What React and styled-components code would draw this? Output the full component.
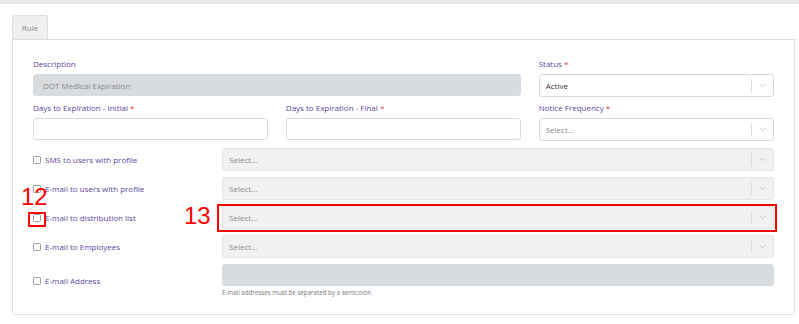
import React from 'react';
import styled, { createGlobalStyle } from 'styled-components';

const GlobalStyle = createGlobalStyle`
    body {
        margin: 0;
        background: #fff;
        font-family: "Open Sans", "Liberation Sans", sans-serif;
    }
`;

const Page = styled.div`
    position: relative;
    width: 799px;
    height: 324px;
    border-top: 4px solid #e9e9ea;
    box-sizing: border-box;
    padding: 11px 4px 0 12px;
`;

const TabBar = styled.div`
    display: flex;
    height: 24px;
`;

const Tab = styled.div`
    width: 36px;
    height: 24px;
    box-sizing: border-box;
    border: 1px solid #dedede;
    border-bottom: none;
    border-radius: 3px 3px 0 0;
    background: #efefef;
    color: #8a8a8a;
    font-size: 8px;
    display: flex;
    align-items: center;
    justify-content: center;
`;

const Panel = styled.div`
    border: 1px solid #e2e2e2;
    border-top-color: #dcdcdc;
    border-radius: 0 0 3px 3px;
    padding: 19px 20px 15px 20px;
    box-sizing: border-box;
    height: 276px;
`;

const TopGrid = styled.div`
    display: grid;
    grid-template-columns: repeat(3, 1fr);
    column-gap: 17.5px;
    row-gap: 6px;
`;

const Field = styled.div`
    grid-column: ${p => p.$span ? `span ${p.$span}` : 'auto'};
    display: flex;
    flex-direction: column;
`;

const Label = styled.label`
    font-size: 8px;
    line-height: 10px;
    color: #6046a0;
    margin-bottom: 5px;
    span {
        color: #e0333d;
    }
`;

const TextInput = styled.div`
    height: 22px;
    box-sizing: border-box;
    border: 1px solid ${p => p.$disabled ? '#d9dcdf' : '#d9d9d9'};
    background: ${p => p.$disabled ? '#d9dcdf' : '#fff'};
    border-radius: 3px;
    padding-left: 9px;
    display: flex;
    align-items: center;
    font-size: 8px;
    color: #8a8a8a;
`;

const SelectBox = styled.div`
    height: 23px;
    box-sizing: border-box;
    border: 1px solid ${p => p.$disabled ? '#e4e4e4' : '#d9d9d9'};
    background: ${p => p.$disabled ? '#f1f1f1' : '#fff'};
    border-radius: 3px;
    display: flex;
    align-items: center;
    font-size: 8px;
    color: ${p => p.$value ? '#333' : '#8a8a8a'};
`;

const SelectValue = styled.div`
    flex: 1;
    padding-left: 6px;
`;

const Indicator = styled.div`
    display: flex;
    align-items: center;
    height: 100%;
    &::before {
        content: '';
        width: 1px;
        height: 13px;
        background: #dcdcdc;
    }
    svg {
        margin: 0 7px 0 7px;
    }
`;

const OptionRows = styled.div`
    margin-top: 7px;
    display: grid;
    grid-template-columns: 172px 1fr;
    column-gap: 17px;
    row-gap: 6px;
    align-items: center;
`;

const CheckLabel = styled.label`
    display: flex;
    align-items: center;
    gap: 4px;
    font-size: 8px;
    color: #6046a0;
`;

const Box = styled.span`
    width: 8px;
    height: 8px;
    box-sizing: border-box;
    border: 1px solid #9a9a9a;
    border-radius: 1.5px;
    background: #fff;
`;

const EmailBlock = styled.div`
    display: flex;
    flex-direction: column;
`;

const Hint = styled.div`
    font-size: 6.2px;
    line-height: 8px;
    color: #777;
    margin-top: 3px;
`;

const Marker = styled.div`
    position: absolute;
    color: #ff0000;
    font-family: "Liberation Sans", Arial, sans-serif;
    font-size: 24px;
    line-height: 1;
`;

const Highlight = styled.div`
    position: absolute;
    box-sizing: border-box;
    border: 2px solid #ff0000;
`;

function Chevron() {
    return (
        <svg width="7" height="5" viewBox="0 0 7 5">
            <path d="M0.8 1 L3.5 3.8 L6.2 1" fill="none" stroke="#c4c4c4" strokeWidth="0.9" />
        </svg>
    );
}

function Select({ value, placeholder = 'Select...', disabled }) {
    return (
        <SelectBox $disabled={disabled} $value={!!value}>
            <SelectValue>{value || placeholder}</SelectValue>
            <Indicator><Chevron /></Indicator>
        </SelectBox>
    );
}

const options = [
    'SMS to users with profile',
    'E-mail to users with profile',
    'E-mail to distribution list',
    'E-mail to Employees',
];

export default function App() {
    return (
        <Page>
            <GlobalStyle />
            <TabBar>
                <Tab>Rule</Tab>
            </TabBar>
            <Panel>
                <TopGrid>
                    <Field $span={2}>
                        <Label>Description</Label>
                        <TextInput $disabled>DOT Medical Expiration</TextInput>
                    </Field>
                    <Field>
                        <Label>Status <span>*</span></Label>
                        <Select value="Active" />
                    </Field>
                    <Field>
                        <Label>Days to Expiration - Initial <span>*</span></Label>
                        <TextInput />
                    </Field>
                    <Field>
                        <Label>Days to Expiration - Final <span>*</span></Label>
                        <TextInput />
                    </Field>
                    <Field>
                        <Label>Notice Frequency <span>*</span></Label>
                        <Select />
                    </Field>
                </TopGrid>
                <OptionRows>
                    {options.map(name => (
                        <React.Fragment key={name}>
                            <CheckLabel><Box />{name}</CheckLabel>
                            <Select disabled />
                        </React.Fragment>
                    ))}
                    <CheckLabel><Box />E-mail Address</CheckLabel>
                    <EmailBlock>
                        <TextInput $disabled />
                        <Hint>E-mail addresses must be separated by a semicolon</Hint>
                    </EmailBlock>
                </OptionRows>
            </Panel>
            <Marker style={{ left: 21, top: 181 }}>12</Marker>
            <Highlight style={{ left: 28, top: 208, width: 18, height: 15 }} />
            <Marker style={{ left: 184, top: 200 }}>13</Marker>
            <Highlight style={{ left: 217, top: 200, width: 560, height: 28 }} />
        </Page>
    );
}
